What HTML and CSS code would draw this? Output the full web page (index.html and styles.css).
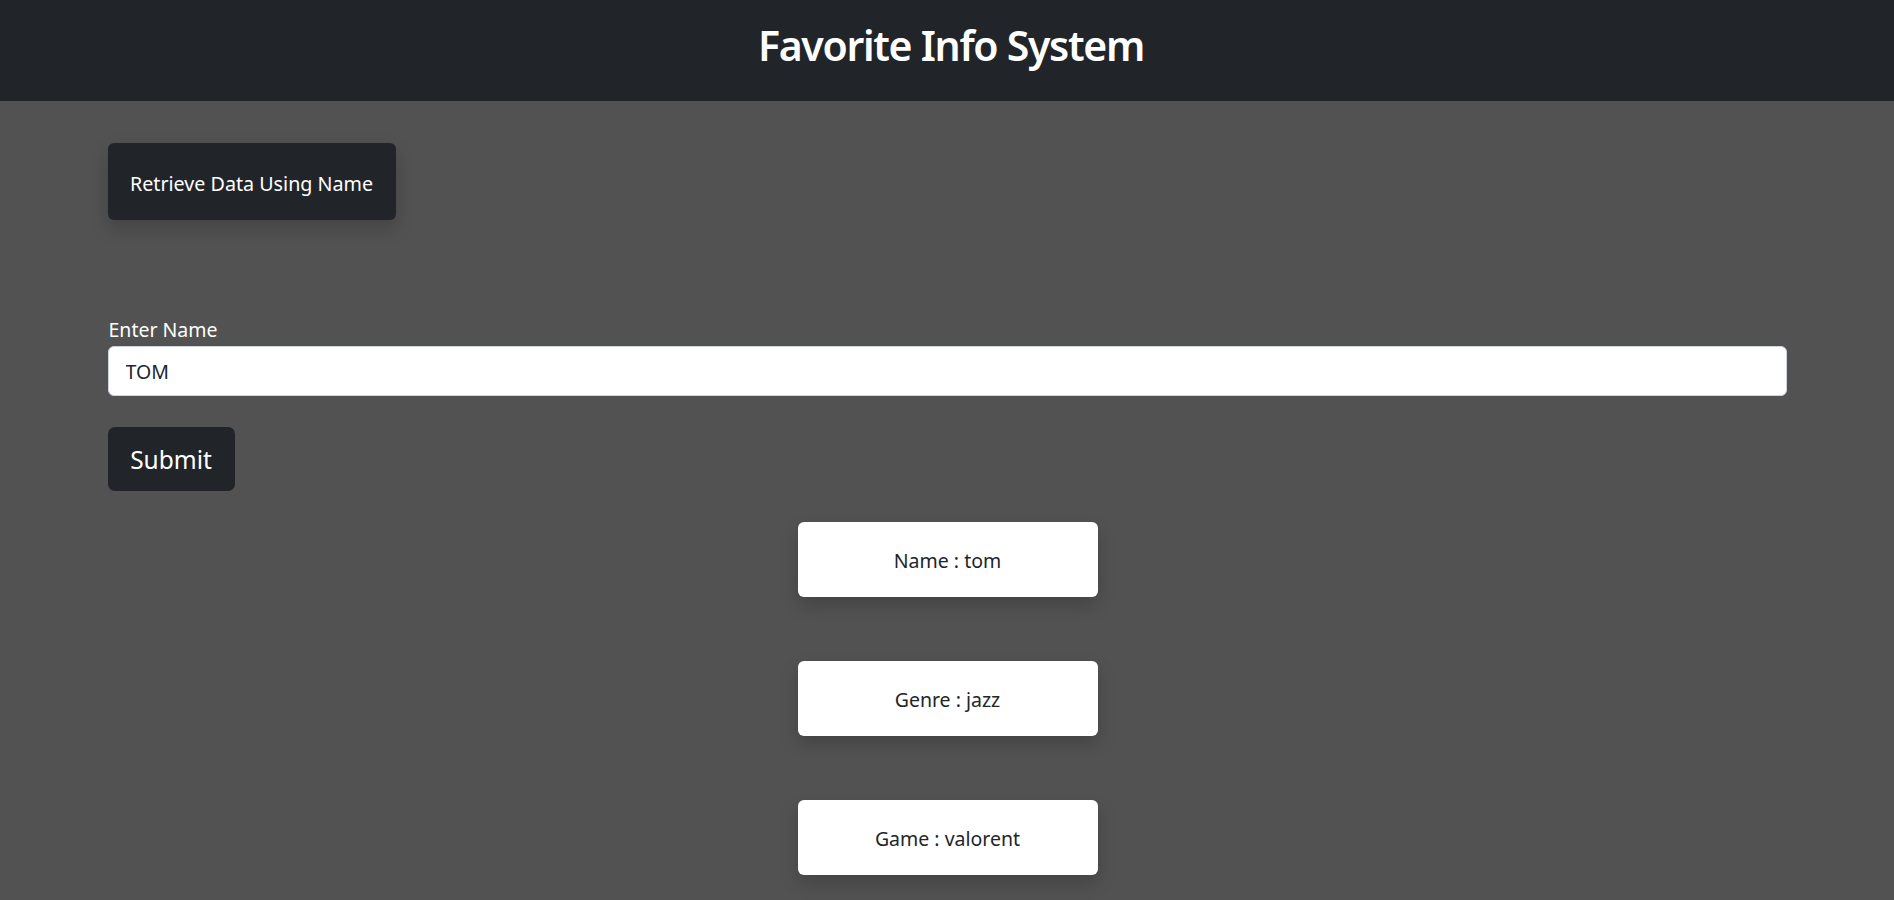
FILE: index.html
```html
<!DOCTYPE html>
<html lang="en">
<head>
<meta charset="utf-8">
<title>Favorite Info System</title>
<link rel="stylesheet" href="styles.css">
</head>
<body>
<header class="topbar">
  <h1 class="title">Favorite Info System</h1>
</header>
<main class="page">
  <button class="btn btn-retrieve" type="button">Retrieve Data Using Name</button>
  <form class="name-form">
    <label class="form-label" for="name">Enter Name</label>
    <input class="form-control" id="name" type="text" value="TOM">
    <button class="btn btn-submit" type="button">Submit</button>
  </form>
  <section class="results">
    <div class="card">Name : tom</div>
    <div class="card">Genre : jazz</div>
    <div class="card">Game : valorent</div>
  </section>
</main>
</body>
</html>
```
FILE: styles.css
```css
* { box-sizing: border-box; }
html, body { margin: 0; padding: 0; }
body {
  background: #525252;
  font-family: "Noto Sans", "Open Sans", sans-serif;
  color: #fff;
  min-height: 900px;
}
.topbar {
  background: #212529;
  height: 101px;
  display: flex;
  align-items: center;
  justify-content: center;
}
.title {
  margin: 0;
  font-size: 41px;
  font-weight: 600;
  letter-spacing: -1.3px;
  line-height: 1.2;
  color: #fff;
  padding-bottom: 9px;
  padding-left: 8px;
}
.page {
  width: 1679px;
  margin: 0 auto;
  padding-top: 42px;
  display: flex;
  flex-direction: column;
  align-items: flex-start;
}
.btn {
  border: none;
  background: #212529;
  color: #fff;
  font-family: inherit;
  cursor: pointer;
}
.btn-retrieve {
  width: 288px;
  height: 77px;
  border-radius: 6px;
  font-size: 19.7px;
  padding: 3px 0 0;
  box-shadow: 0 8px 18px rgba(0, 0, 0, 0.18);
}
.name-form {
  margin-top: 95px;
  width: 100%;
  display: flex;
  flex-direction: column;
  align-items: flex-start;
}
.form-label {
  font-size: 19.5px;
  line-height: 30px;
  height: 31px;
  padding-left: 1px;
}
.form-control {
  width: 100%;
  height: 50px;
  border: 1px solid #ced4da;
  border-radius: 6px;
  padding: 0 17px;
  font-family: inherit;
  font-size: 19.5px;
  color: #212529;
  background: #fff;
  outline: none;
}
.btn-submit {
  margin-top: 31px;
  width: 127px;
  height: 64px;
  border-radius: 7px;
  font-size: 24.5px;
}
.results {
  width: 100%;
  margin-top: 31px;
  display: flex;
  flex-direction: column;
  align-items: center;
  gap: 64px;
  padding-left: 1px;
}
.card {
  width: 300px;
  height: 75px;
  background: #fff;
  border-radius: 6px;
  color: #212529;
  font-size: 19.5px;
  padding-top: 2px;
  display: flex;
  align-items: center;
  justify-content: center;
  box-shadow: 0 8px 18px rgba(0, 0, 0, 0.18);
}
```
